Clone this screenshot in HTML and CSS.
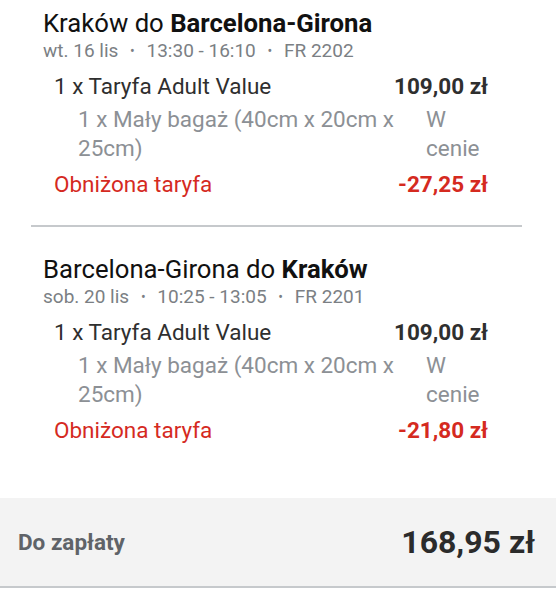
FILE: index.html
```html
<!DOCTYPE html>
<html lang="pl">
<head>
<meta charset="utf-8">
<link rel="stylesheet" href="styles.css">
</head>
<body>
<div class="summary">
  <section class="leg">
    <h2 class="route">Kraków do <b>Barcelona-Girona</b></h2>
    <div class="meta">wt. 16 lis <span class="dot">•</span> 13:30 - 16:10 <span class="dot">•</span> FR 2202</div>
    <div class="row fare"><span>1 x Taryfa Adult Value</span><span class="amt">109,00 zł</span></div>
    <div class="row bag"><span class="bag-name">1 x Mały bagaż (40cm x 20cm x 25cm)</span><span class="bag-price">W cenie</span></div>
    <div class="row disc"><span>Obniżona taryfa</span><span class="amt">-27,25 zł</span></div>
  </section>
  <section class="leg">
    <h2 class="route">Barcelona-Girona do <b>Kraków</b></h2>
    <div class="meta">sob. 20 lis <span class="dot">•</span> 10:25 - 13:05 <span class="dot">•</span> FR 2201</div>
    <div class="row fare"><span>1 x Taryfa Adult Value</span><span class="amt">109,00 zł</span></div>
    <div class="row bag"><span class="bag-name">1 x Mały bagaż (40cm x 20cm x 25cm)</span><span class="bag-price">W cenie</span></div>
    <div class="row disc"><span>Obniżona taryfa</span><span class="amt">-21,80 zł</span></div>
  </section>
  <footer class="total">
    <span class="total-label">Do zapłaty</span>
    <span class="total-amt">168,95 zł</span>
  </footer>
</div>
</body>
</html>
```
FILE: styles.css
```css
html, body {
  margin: 0;
  padding: 0;
  background: #fff;
}
body {
  font-family: Roboto, "Noto Sans", sans-serif;
  width: 556px;
}
.leg {
  margin: 0 34px 0 31px;
  padding: 8px 0 26px;
}
.leg + .leg {
  border-top: 2px solid #c6c9cc;
  padding-top: 27px;
}
.route {
  margin: 0;
  padding-left: 12px;
  font-size: 25.7px;
  line-height: 30px;
  font-weight: 400;
  color: #111;
}
.route b {
  font-weight: 700;
}
.meta {
  margin-top: 2px;
  padding-left: 12px;
  font-size: 19px;
  line-height: 22px;
  color: #7b7f84;
}
.dot {
  font-size: 14px;
  margin: 0 7px;
  vertical-align: 1px;
}
.row {
  display: flex;
  justify-content: space-between;
  padding: 0 34px 0 23px;
  font-size: 22.5px;
  line-height: 29px;
}
.fare {
  margin-top: 10px;
  color: #2f2f2f;
}
.amt {
  font-weight: 700;
}
.bag {
  margin-top: 4px;
  padding-left: 47px;
  gap: 20px;
  color: #8c9095;
}
.bag-name {
  flex: 1 1 auto;
}
.bag-price {
  flex: 0 0 62px;
}
.disc {
  margin-top: 7px;
  color: #d52a1f;
}
.total {
  margin-top: 27px;
  height: 90px;
  box-sizing: border-box;
  display: flex;
  align-items: center;
  justify-content: space-between;
  padding: 0 21px 0 18px;
  background: #f3f3f3;
  border-bottom: 2px solid #c6c9cc;
}
.total-label {
  font-size: 22.5px;
  font-weight: 700;
  color: #5f6368;
}
.total-amt {
  font-size: 32px;
  font-weight: 700;
  color: #2b2b2b;
}
```
